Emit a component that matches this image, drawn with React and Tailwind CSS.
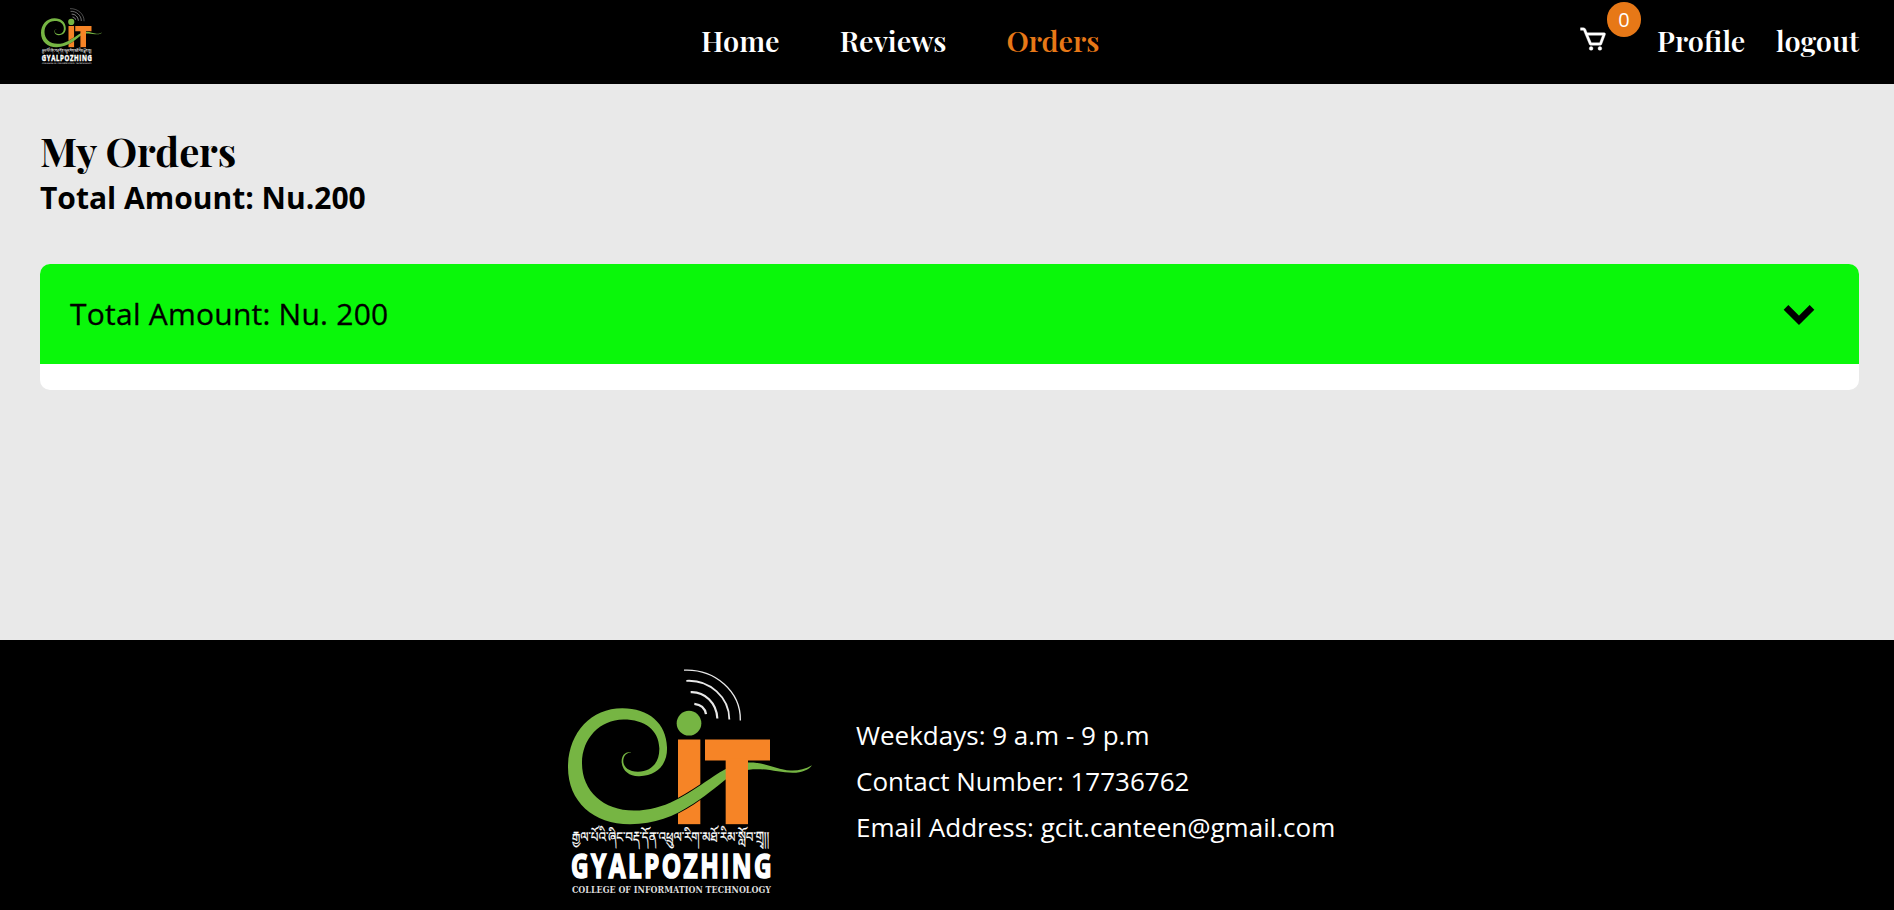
import { BiCart } from 'react-icons/bi';

function Logo({ className }) {
  return (
    <svg className={className} viewBox="54 40 732 680" role="img" aria-label="GCIT">
      <g fill="none" stroke="#e8e8e8">
        <path d="M433 147 C452 149 465 160 468 178" strokeWidth="7" />
        <path d="M422 112 C464 110 500 145 502 191" strokeWidth="6.5" />
        <path d="M409 78 C479 74 538 128 538 194" strokeWidth="5.5" />
        <path d="M402 46 C495 42 573 110 571 197" strokeWidth="4" />
      </g>
      <circle cx="417" cy="205" r="37" fill="#76b543" />
      <g fill="#f68426">
        <rect x="384" y="254" width="67" height="254" />
        <rect x="465" y="254" width="195" height="63" />
      </g>
      <path
        d="M244 292 C222 290 214 306 215 323 C218 350 240 365 268 364 C325 362 353 325 351 277 C349 205 296 160 217 160 C120 160 54 238 54 337 C54 440 130 508 240 508 C315 508 370 486 430 447 C480 414 510 387 530 372 C560 349 590 343 620 343 C660 343 692 354 728 354 C757 353 778 344 786 331 C764 343 745 348 722 347 C680 345 650 323 600 323 C555 323 520 345 478 373 C410 418 345 467 252 467 C160 467 96 408 96 325 C96 250 150 195 220 194 C285 194 326 226 328 280 C329 324 303 350 264 351 C234 350 218 335 220 315 C222 300 230 294 244 292 Z"
        fill="#76b543"
        stroke="#000"
        strokeWidth="5"
        paintOrder="stroke"
      />
      <rect x="527" y="310" width="67" height="198" fill="#f68426" />
      <g transform="translate(66 562) scale(1 1.12)">
        <text textLength="592" lengthAdjust="spacingAndGlyphs" fontSize="38" fontWeight="400" fill="#fff" stroke="#fff" strokeWidth="0.6" fontFamily="'Noto Serif Tibetan', 'Noto Sans Tibetan', 'Noto Sans', sans-serif">རྒྱལ་པོའི་ཞིང་བརྡ་དོན་འཕྲུལ་རིག་མཐོ་རིམ་སློབ་གྲྭ།།</text>
      </g>
      <g transform="translate(63 669) scale(0.73 1)">
        <text textLength="824" fontSize="100" fontWeight="700" fill="#fff" stroke="#fff" strokeWidth="5" fontFamily="'Open Sans', sans-serif">GYALPOZHING</text>
      </g>
      <text x="66" y="714" textLength="597" lengthAdjust="spacingAndGlyphs" fontSize="26" fontWeight="700" fill="#dcdcdc" fontFamily="'DejaVu Serif', serif">COLLEGE OF INFORMATION TECHNOLOGY</text>
    </svg>
  );
}

export default function App() {
  return (
    <div className="flex h-[910px] flex-col overflow-hidden bg-[#e9e9e9] font-['Open_Sans',sans-serif] text-black">
      <header className="flex h-[84px] shrink-0 justify-between bg-black pl-[41px] pr-[34px] text-white">
        <div className="flex w-[660px] pt-2">
          <Logo className="h-[57px] w-[61px]" />
        </div>
        <nav className="flex flex-1 gap-[60px] pt-5 font-['Playfair_Display','Liberation_Serif',serif] text-[28.8px] leading-[40px] font-semibold">
          <a>Home</a>
          <a>Reviews</a>
          <a className="text-[#e77817]">Orders</a>
        </nav>
        <div className="flex font-['Playfair_Display','Liberation_Serif',serif] text-[28.8px] leading-[40px] font-semibold">
          <BiCart className="mt-6 size-[30px] stroke-white stroke-[0.3]" />
          <span className="mt-[2px] -ml-px flex h-[35px] w-[34px] items-center justify-center rounded-full bg-[#e77817] font-['Open_Sans',sans-serif] text-[20px] leading-none font-normal">0</span>
          <a className="mt-5 ml-4 w-[119px]">Profile</a>
          <a className="mt-5 w-[84px]">logout</a>
        </div>
      </header>

      <main className="flex-1 px-10 pt-[41px]">
        <h1 className="h-[51px] font-['Playfair_Display','Liberation_Serif',serif] text-[40px] leading-[52px] font-bold">My Orders</h1>
        <p className="mt-[2px] h-[40px] text-[30px] leading-[40px] font-bold">Total Amount: Nu.200</p>
        <section className="mt-[46px] mr-[-5px] h-[126px] overflow-hidden rounded-[10px] bg-white">
          <div className="flex h-[100px] items-center justify-between bg-[#0af70a] pr-11 pl-[30px] text-[30px] font-medium">
            <span className="-mt-[2px] tracking-[0.24px] [-webkit-text-stroke:0.3px_black]">Total Amount: Nu. 200</span>
            <svg className="mt-[2px] h-[22px] w-8" viewBox="0 0 32 22" fill="none" stroke="currentColor" strokeWidth="6.6">
              <path d="M3 3.4 16 16.4 29 3.4" />
            </svg>
          </div>
        </section>
      </main>

      <footer className="flex h-[270px] shrink-0 bg-black pl-[568px] text-white">
        <Logo className="mt-[28px] h-[227px] w-[244px] shrink-0" />
        <div className="mt-[72px] ml-11 text-[26px] leading-[46px]">
          <p>Weekdays: 9 a.m - 9 p.m</p>
          <p>Contact Number: 17736762</p>
          <p>Email Address: gcit.canteen@gmail.com</p>
        </div>
      </footer>
    </div>
  );
}
